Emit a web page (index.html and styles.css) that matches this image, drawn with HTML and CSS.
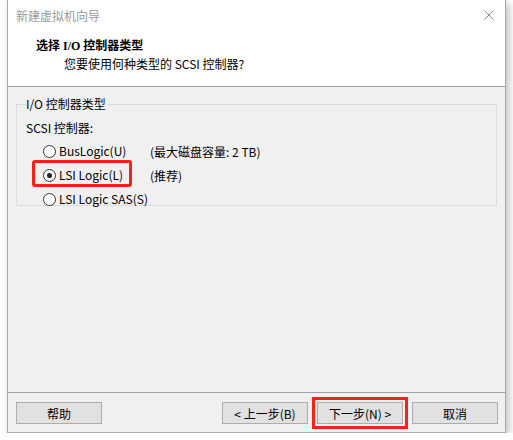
FILE: index.html
```html
<!DOCTYPE html>
<html lang="zh-CN">
<head>
    <meta charset="UTF-8">
    <meta name="viewport" content="width=device-width, initial-scale=1.0">
    <title>新建虚拟机向导</title>
    <link rel="stylesheet" href="styles.css">
</head>
<body>
    <div class="window">
        <div class="titlebar">
            <span class="title">新建虚拟机向导</span>
            <svg class="close" width="10" height="10" viewBox="0 0 10 10">
                <path d="M0.5 0.5 L9.5 9.5 M9.5 0.5 L0.5 9.5" stroke="#8a8a8a" stroke-width="1" fill="none"/>
            </svg>
        </div>
        <div class="header">
            <div class="header-title">选择 I/O 控制器类型</div>
            <div class="header-sub">您要使用何种类型的 SCSI 控制器?</div>
        </div>
        <div class="content">
            <fieldset class="group">
                <legend>I/O 控制器类型</legend>
                <div class="group-label">SCSI 控制器:</div>
                <div class="choices">
                    <label class="choice"><span class="radio"></span>BusLogic(U)</label>
                    <span class="note">(最大磁盘容量: 2 TB)</span>
                    <label class="choice marked"><span class="radio checked"></span>LSI Logic(L)</label>
                    <span class="note">(推荐)</span>
                    <label class="choice"><span class="radio"></span>LSI Logic SAS(S)</label>
                    <span class="note"></span>
                </div>
            </fieldset>
        </div>
        <div class="footer">
            <button class="btn">帮助</button>
            <div class="spacer"></div>
            <button class="btn">&lt; 上一步(B)</button>
            <button class="btn marked-btn">下一步(N) &gt;</button>
            <button class="btn">取消</button>
        </div>
    </div>
</body>
</html>
```

FILE: styles.css
```css
body {
    margin: 0;
    background: #ffffff;
    font-family: "Noto Sans CJK SC", sans-serif;
    font-size: 12px;
    color: #000;
}
.window {
    margin-left: 7px;
    width: 497px;
    height: 432px;
    border: 1px solid #a9a9a9;
    border-top: none;
    background: #f0f0f0;
    display: flex;
    flex-direction: column;
    box-shadow: 3px 3px 8px rgba(0, 0, 0, 0.25);
}
.titlebar {
    height: 30px;
    background: #fff;
    display: flex;
    align-items: center;
    padding: 0 11px 0 8px;
}
.title {
    color: #999;
    flex: 1;
}
.header {
    background: #fff;
    height: 57px;
    border-bottom: 1px solid #a0a0a0;
    box-sizing: border-box;
    padding-top: 7px;
}
.header-title {
    font-family: "Liberation Serif", "Noto Sans CJK SC", serif;
    font-weight: bold;
    font-size: 12px;
    margin-left: 28px;
    line-height: 18px;
}
.header-sub {
    margin-left: 56px;
    line-height: 18px;
}
.content {
    flex: 1;
    padding: 9px 8px 0;
    border-bottom: 1px solid #a0a0a0;
}
.group {
    margin: 0;
    height: 110px;
    box-sizing: border-box;
    border: 1px solid #dcdcdc;
    padding: 0 9px;
}
.group legend {
    padding: 0 2px 0 0;
    line-height: 16px;
}
.group-label {
    margin-top: 8px;
    line-height: 16px;
}
.choices {
    display: grid;
    grid-template-columns: 107px auto;
    grid-auto-rows: 24px;
    align-items: center;
    margin-left: 17px;
    margin-top: 3px;
}
.choice {
    display: inline-flex;
    align-items: center;
    gap: 3px;
    line-height: 16px;
    position: relative;
    justify-self: start;
}
.marked::after {
    content: "";
    position: absolute;
    left: -11px;
    right: -9px;
    top: -7px;
    bottom: -4px;
    border: 3px solid #f52218;
    border-radius: 3px;
}
.radio {
    width: 11px;
    height: 11px;
    border: 1px solid #333;
    border-radius: 50%;
    background: #fff;
    position: relative;
}
.radio.checked::before {
    content: "";
    position: absolute;
    left: 3px;
    top: 3px;
    width: 5px;
    height: 5px;
    border-radius: 50%;
    background: #222;
}
.footer {
    display: flex;
    gap: 9px;
    padding: 9px 7px 8px 8px;
}
.spacer {
    flex: 1;
}
.btn {
    width: 86px;
    height: 22px;
    border: 1px solid #adadad;
    background: #e1e1e1;
    font-family: inherit;
    font-size: 12px;
    padding: 0;
    color: #000;
}
.marked-btn {
    outline: 3px solid #f52218;
    outline-offset: 2px;
    border-radius: 0;
}
```
